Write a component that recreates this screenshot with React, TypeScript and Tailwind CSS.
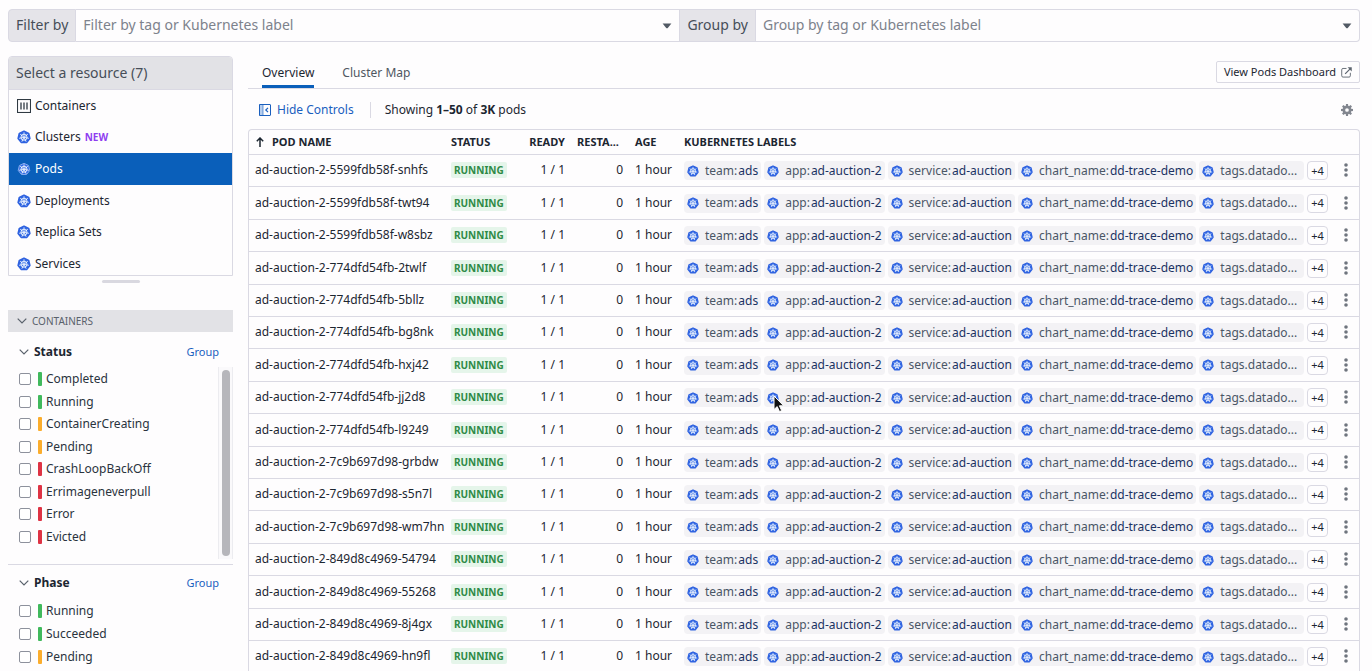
import React from "react";

const HEPTAGON = "12,2.2 19.9,6 21.9,14.5 16.4,21.4 7.6,21.4 2.1,14.5 4.1,6";
const SPOKES = [0, 1, 2, 3, 4, 5, 6];
const TEETH = [0, 45, 90, 135, 180, 225, 270, 315];

function KubeIcon({ className, outlined = false }: { className: string; outlined?: boolean }) {
  return (
    <svg viewBox="0 0 24 24" className={className} aria-hidden="true">
      <polygon
        points={HEPTAGON}
        fill="#326ce5"
        stroke={outlined ? "#8fb0f0" : "#2f62e0"}
        strokeWidth={outlined ? 1.6 : 3}
        strokeLinejoin="round"
      />
      <g stroke="#fff" fill="none" strokeOpacity="0.9">
        <circle cx="12" cy="12.4" r="5.2" strokeWidth="1.6" />
        {SPOKES.map((i) => (
          <line key={i} x1="12" y1="11" x2="12" y2="4.6" strokeWidth="1.4" strokeLinecap="round" transform={`rotate(${(i * 360) / 7} 12 12.4)`} />
        ))}
      </g>
      <circle cx="12" cy="12.4" r="1.4" fill="#fff" />
    </svg>
  );
}

function ContainersIcon() {
  return (
    <svg viewBox="0 0 14 14" className="size-3.5" fill="none" stroke="#2f3942" aria-hidden="true">
      <rect x="0.5" y="0.5" width="13" height="13" strokeWidth="1.1" />
      <path d="M4 3.5v7M7 3.5v7M10 3.5v7" strokeWidth="1.3" />
    </svg>
  );
}

function PanelIcon() {
  return (
    <svg viewBox="0 0 12 12" className="size-3" fill="none" stroke="#1a5fbe" aria-hidden="true">
      <path d="M0.5 0.5h3.500v11h-3.500z" fill="#b5cdee" strokeWidth="0.6" />
      <rect x="0.5" y="0.5" width="11" height="11" rx="0.5" />
      <path d="M9 3.800 6.800 6 9 8.200" strokeWidth="1.2" />
    </svg>
  );
}

function ExternalIcon() {
  return (
    <svg viewBox="0 0 12 12" className="size-[11px]" fill="none" stroke="#5d656f" strokeWidth="1" aria-hidden="true">
      <path d="M6 1.600H2.200A1.400 1.400 0 0 0 .8 3v6.600a1.400 1.400 0 0 0 1.400 1.400h6.600a1.400 1.400 0 0 0 1.400-1.400V6.300" />
      <path d="M4.500 7.500 10.500 1.500" strokeWidth="1.4" />
      <path d="M7.200 .3h4.500v4.500z" fill="#5d656f" stroke="none" />
    </svg>
  );
}

function GearIcon() {
  return (
    <svg viewBox="0 0 24 24" className="size-3" aria-hidden="true">
      {TEETH.map((a) => (
        <path key={a} d="M10 0h4l.8 6h-5.600z" fill="#82868f" transform={`rotate(${a} 12 12)`} />
      ))}
      <circle cx="12" cy="12" r="6.200" fill="none" stroke="#82868f" strokeWidth="5" />
    </svg>
  );
}

function Caret() {
  return (
    <svg viewBox="0 0 10 6" className="h-[6px] w-[10px]" aria-hidden="true">
      <path d="M.6 .5h8.800L6 4.800Q5 5.800 4 4.800z" fill="#525a64" />
    </svg>
  );
}

function Chevron() {
  return (
    <svg viewBox="0 0 10 6" className="h-[6px] w-[10px]" fill="none" stroke="#5a626c" strokeWidth="1.200" aria-hidden="true">
      <path d="M.7 .6 5 5 9.300 .6" />
    </svg>
  );
}

function SearchField({ id, label, placeholder, first }: { id: string; label: string; placeholder: string; first?: boolean }) {
  return (
    <>
      <label
        htmlFor={id}
        className={`flex shrink-0 items-center border border-[#dad9e3] bg-[#e5e4e9] px-[7px] pb-0.5 text-[14px] text-[#464e58] ${first ? "rounded-l" : "border-l-0"}`}
      >
        {label}
      </label>
      <div className={`flex min-w-0 flex-1 items-center border border-l-0 border-[#dad9e3] pr-[7px] ${first ? "" : "rounded-r"}`}>
        <input
          id={id}
          placeholder={placeholder}
          className="h-full min-w-0 flex-1 bg-transparent px-[7px] pb-0.5 text-[14px] outline-none placeholder:text-[#7d828c]"
        />
        <button type="button" aria-label={`Open ${label}`}>
          <Caret />
        </button>
      </div>
    </>
  );
}

const RESOURCES = ["Containers", "Clusters", "Pods", "Deployments", "Replica Sets", "Services"];

function ResourceList() {
  return (
    <section className="overflow-hidden rounded-t border border-[#dad9e3]">
      <h2 className="flex h-[33px] items-center border-b border-[#dad9e3] bg-[#e2e2e6] px-[7px] pb-px text-[14px] text-[#464e58]">Select a resource (7)</h2>
      <div className="h-[185px] overflow-hidden">
        <ul className="grid h-[190px] grid-rows-6">
          {RESOURCES.map((name) => {
            const selected = name === "Pods";
            return (
              <li key={name} className="grid">
                <a href="#" className={`flex items-center gap-1 px-2 text-[12px] ${selected ? "bg-[#0a5fba] text-white" : "text-[#1c2631]"}`}>
                  {name === "Containers" ? <ContainersIcon /> : <KubeIcon className="size-3.5" outlined={selected} />}
                  <span>{name}</span>
                  {name === "Clusters" && <span className="text-[10px] font-bold text-[#8f3ef0]">NEW</span>}
                </a>
              </li>
            );
          })}
        </ul>
      </div>
    </section>
  );
}

const GREEN = "bg-[#41b95d]";
const ORANGE = "bg-[#fbad2d]";
const RED = "bg-[#de3344]";

const STATUSES = [
  ["Completed", GREEN],
  ["Running", GREEN],
  ["ContainerCreating", ORANGE],
  ["Pending", ORANGE],
  ["CrashLoopBackOff", RED],
  ["Errimageneverpull", RED],
  ["Error", RED],
  ["Evicted", RED],
];

const PHASES = [
  ["Running", GREEN],
  ["Succeeded", GREEN],
  ["Pending", ORANGE],
];

function FacetOption({ name, color }: { name: string; color: string }) {
  return (
    <label className="flex items-center text-[12px] text-[#2a333d]">
      <input type="checkbox" className="size-3 appearance-none rounded-[2px] border border-[#8d919c] bg-white" />
      <span className={`ml-[7px] h-3.5 w-1 rounded-[1px] ${color}`} />
      <span className="ml-1">{name}</span>
    </label>
  );
}

function FacetHeader({ title }: { title: string }) {
  return (
    <div className="flex h-5 items-center justify-between pl-[11px] pr-3.5">
      <button type="button" className="flex items-center gap-[5px] text-[12px] font-bold text-[#1c2631]">
        <Chevron />
        {title}
      </button>
      <button type="button" className="text-[11px] text-[#1a5fbe]">
        Group
      </button>
    </div>
  );
}

const PODS = [
  "5599fdb58f-snhfs",
  "5599fdb58f-twt94",
  "5599fdb58f-w8sbz",
  "774dfd54fb-2twlf",
  "774dfd54fb-5bllz",
  "774dfd54fb-bg8nk",
  "774dfd54fb-hxj42",
  "774dfd54fb-jj2d8",
  "774dfd54fb-l9249",
  "7c9b697d98-grbdw",
  "7c9b697d98-s5n7l",
  "7c9b697d98-wm7hn",
  "849d8c4969-54794",
  "849d8c4969-55268",
  "849d8c4969-8j4gx",
  "849d8c4969-hn9fl",
];

const LABELS = [
  ["team:", "ads"],
  ["app:", "ad-auction-2"],
  ["service:", "ad-auction"],
  ["chart_name:", "dd-trace-demo"],
  ["tags.datado...", ""],
];

function Cursor() {
  return (
    <svg viewBox="0 0 12 18" className="absolute left-[9px] top-[7px] h-[18px] w-3" aria-hidden="true">
      <path d="M1 1v13.500l3.200-2.900 2.300 5 2.200-1-2.300-4.800h4.300z" fill="#111" stroke="#fff" strokeWidth="1" />
    </svg>
  );
}

function Tag({ name, value, pointed }: { name: string; value: string; pointed: boolean }) {
  return (
    <span className={`relative flex h-[19px] items-center rounded bg-[#f3f2f5] pl-[3px] text-[12px] text-[#4a5666] ${value ? "pr-[3px]" : "pr-[7px]"}`}>
      <KubeIcon className="mr-1.5 size-3" />
      {name}
      {value && <span className="ml-px text-[#1b3263]">{value}</span>}
      {pointed && <Cursor />}
    </span>
  );
}

function PodRow({ name }: { name: string }) {
  return (
    <tr className="h-8 border-t border-[#dad9e3] nth-[5n+2]:h-[33px] nth-[5n+4]:h-[33px]">
      <td className="pl-1.5">ad-auction-2-{name}</td>
      <td>
        <span className="block h-4 w-fit rounded-[2px] bg-[#e5f5ea] px-[3px] text-[10px] leading-4 font-bold text-[#2f8a46]">RUNNING</span>
      </td>
      <td className="text-right">1 / 1</td>
      <td className="text-right">0</td>
      <td className="pl-3">1 hour</td>
      <td className="pt-px pl-3">
        <div className="flex items-center gap-[3px]">
          {LABELS.map(([key, value]) => (
            <Tag key={key} name={key} value={value} pointed={name.endsWith("jj2d8") && key === "app:"} />
          ))}
          <button type="button" className="h-[19px] rounded border border-[#dad9e3] px-[3px] text-[11px] leading-4">
            +4
          </button>
        </div>
      </td>
      <td>
        <button type="button" aria-label="Row actions" className="flex w-full justify-center">
          <svg viewBox="0 0 4 14" className="h-3.5 w-1" fill="#6f757e" aria-hidden="true">
            <circle cx="2" cy="2" r="1.800" />
            <circle cx="2" cy="7" r="1.800" />
            <circle cx="2" cy="12" r="1.800" />
          </svg>
        </button>
      </td>
    </tr>
  );
}

export default function App() {
  return (
    <div className="h-screen overflow-hidden bg-[#fefdfe] pl-2 pr-3 pt-[9px] font-['Noto_Sans',sans-serif] text-[12px] text-[#1c2631]">
      <div className="flex h-[33px]">
        <SearchField id="filter" label="Filter by" placeholder="Filter by tag or Kubernetes label" first />
        <SearchField id="group" label="Group by" placeholder="Group by tag or Kubernetes label" />
      </div>

      <div className="mt-3.5 flex items-start gap-[15px]">
        <aside className="w-[225px] shrink-0">
          <ResourceList />
          <div className="mx-auto mt-1 h-[3px] w-[38px] rounded bg-[#d9d8e0]" />
          <button type="button" className="mt-[27px] flex h-[22px] w-full items-center gap-[5px] bg-[#e2e2e6] pl-[9px] text-[10px] text-[#59616b]">
            <Chevron />
            CONTAINERS
          </button>
          <section className="pt-[10px]">
            <FacetHeader title="Status" />
            <div className="mt-[5px] flex h-[192px] justify-between">
              <div className="mt-px grid h-[180px] grid-rows-8 pl-[11px]">
                {STATUSES.map(([name, color]) => (
                  <FacetOption key={name} name={name} color={color} />
                ))}
              </div>
              <div className="w-[15px] border-x border-[#ececf0] bg-[#faf9fb] px-[3px] py-[3px]">
                <div className="h-full w-2 rounded-full bg-[#b6b6bb]" />
              </div>
            </div>
          </section>
          <section className="mt-[5px] border-t border-[#dad9e3] pt-2">
            <FacetHeader title="Phase" />
            <div className="mt-[7px] grid h-[68px] grid-rows-3 pl-[11px]">
              {PHASES.map(([name, color]) => (
                <FacetOption key={name} name={name} color={color} />
              ))}
            </div>
          </section>
        </aside>

        <main className="min-w-0 flex-1">
          <div className="flex h-[33px] items-stretch border-b border-[#dad9e3] pl-3.5">
            <nav className="flex gap-7">
              <a href="#" className="flex items-center border-b-[3px] border-[#0a5fba] pt-1">
                Overview
              </a>
              <a href="#" className="flex items-center border-b-[3px] border-transparent pt-1 text-[#4f5761]">
                Cluster Map
              </a>
            </nav>
            <a href="#" className="ml-auto mt-[5px] flex h-[22px] items-center gap-[5px] rounded-[2px] border border-[#dad9e3] px-[7px] text-[11px]">
              View Pods Dashboard
              <ExternalIcon />
            </a>
          </div>

          <div className="flex h-10 items-center pt-0.5 pl-[11px] pr-[7px]">
            <button type="button" className="flex items-center gap-1.5 text-[#1a5fbe]">
              <PanelIcon />
              Hide Controls
            </button>
            <span className="ml-4 mr-3.5 h-4 w-px bg-[#dad9e3]" />
            <p className="flex-1">
              Showing <b>1–50</b> of <b>3K</b> pods
            </p>
            <button type="button" aria-label="Settings">
              <GearIcon />
            </button>
          </div>

          <div className="rounded-t border border-b-0 border-[#dad9e3]">
            <table className="w-full table-fixed">
              <thead>
                <tr className="h-6 text-left text-[11px]">
                  <th className="w-[202px] pl-[7px]">
                    <span className="flex items-center gap-2">
                      <svg viewBox="0 0 8 10" className="h-2.5 w-2" fill="none" stroke="#1c2631" strokeWidth="1.500" aria-hidden="true">
                        <path d="M4 10V1M.8 4.200 4 1l3.200 3.200" />
                      </svg>
                      POD NAME
                    </span>
                  </th>
                  <th className="w-[70px]">STATUS</th>
                  <th className="w-11 text-right">READY</th>
                  <th className="w-[58px] pl-3">RESTA...</th>
                  <th className="w-[49px] pl-3">AGE</th>
                  <th className="pl-3">KUBERNETES LABELS</th>
                  <th className="w-[27px]" aria-label="Actions" />
                </tr>
              </thead>
              <tbody className="whitespace-nowrap">
                {PODS.map((name) => (
                  <PodRow key={name} name={name} />
                ))}
              </tbody>
            </table>
          </div>
        </main>
      </div>
    </div>
  );
}
